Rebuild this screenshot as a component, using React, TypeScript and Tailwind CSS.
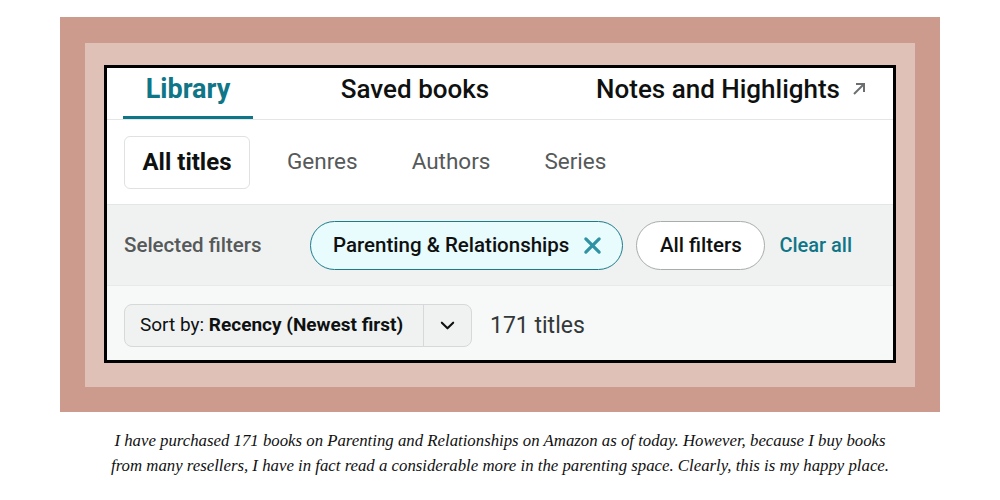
import React from 'react';

const ui = { fontFamily: 'Roboto, "Noto Sans", Arial, sans-serif' };

const ArrowUpRight = () => (
    <svg width="16" height="16" viewBox="0 0 16 16" fill="none" stroke="#6b6f70" strokeWidth="2">
        <path d="M3 13 L13 3" />
        <path d="M5 3 H13 V11" />
    </svg>
);

const CloseX = () => (
    <svg width="19" height="19" viewBox="0 0 20 20" fill="none" stroke="#2f93a3" strokeWidth="3.4" strokeLinecap="round">
        <path d="M3 3 L17 17" />
        <path d="M17 3 L3 17" />
    </svg>
);

const Chevron = () => (
    <svg width="17" height="17" viewBox="0 0 18 18" fill="none" stroke="#0f1111" strokeWidth="2.2" strokeLinecap="round" strokeLinejoin="round">
        <path d="M3 6 L9 12 L15 6" />
    </svg>
);

export default function App() {
    return (
        <div className="w-[1000px] h-[500px] bg-white overflow-hidden">
            {/* Frame */}
            <div className="mx-[60px] mt-[17px] h-[395px] bg-[#cd9b8d] pt-[26px] px-[25px]">
                <div className="h-[344px] bg-[#dfc1b8] pt-[22px] px-[19px]">
                    <div className="h-[298px] border-[3px] border-black bg-white flex flex-col" style={ui}>
                        {/* Top tabs */}
                        <div className="h-[52px] flex items-stretch border-b border-[#e3e6e6]">
                            <div className="ml-[16px] w-[130px] flex items-center justify-center border-b-[3px] border-[#0f7688] text-[27px] font-bold text-[#0f7688] pb-[6px]">
                                Library
                            </div>
                            <div className="w-[324px] flex items-center justify-center text-[26px] font-medium text-[#0f1111] pb-[9px]">
                                Saved books
                            </div>
                            <div className="flex-1 flex items-center justify-end pr-[26px] gap-[11px] text-[26px] font-medium text-[#0f1111] pb-[9px]">
                                Notes and Highlights
                                <ArrowUpRight />
                            </div>
                        </div>

                        {/* Category tabs */}
                        <div className="h-[84px] flex items-center pl-[17px]">
                            <div className="h-[53px] w-[126px] flex items-center justify-center border border-[#dfe2e2] rounded-md text-[24px] font-bold text-[#0f1111]">
                                All titles
                            </div>
                            <div className="ml-[37px] text-[22.5px] text-[#565959]">Genres</div>
                            <div className="ml-[54px] text-[22.5px] text-[#565959]">Authors</div>
                            <div className="ml-[54px] text-[22.5px] text-[#565959]">Series</div>
                        </div>

                        {/* Selected filters */}
                        <div className="h-[81px] flex items-center bg-[#f0f2f2] border-t border-[#e3e6e6] pl-[17px]">
                            <div className="w-[186px] text-[20.5px] font-medium text-[#565959]">Selected filters</div>
                            <div className="h-[49px] flex items-center gap-[14px] pl-[22px] pr-[20px] rounded-full border-[1.5px] border-[#1b7c8c] bg-[#e8fbfd] text-[20.5px] font-medium text-[#0f1111]">
                                Parenting &amp; Relationships
                                <CloseX />
                            </div>
                            <div className="ml-[13px] h-[49px] w-[129px] flex items-center justify-center rounded-full border-[1.5px] border-[#a9acac] bg-white text-[20.5px] font-medium text-[#0f1111]">
                                All filters
                            </div>
                            <div className="ml-[14px] text-[20px] font-medium text-[#0f7688]">Clear all</div>
                        </div>

                        {/* Sort row */}
                        <div className="flex-1 flex items-center bg-[#f7f8f8] border-t border-[#e8eaea] pl-[17px] pt-[4px]">
                            <div className="h-[43px] w-[348px] flex items-stretch rounded-lg border border-[#d5d9d9] bg-[#f0f2f2] text-[19px] text-[#0f1111]">
                                <div className="flex-1 flex items-center pl-[15px]">
                                    Sort by:&nbsp;<span className="font-bold">Recency (Newest first)</span>
                                </div>
                                <div className="w-[48px] flex items-center justify-center border-l border-[#d5d9d9]">
                                    <Chevron />
                                </div>
                            </div>
                            <div className="ml-[18px] text-[23px] text-[#333838] pt-[3px]">171 titles</div>
                        </div>
                    </div>
                </div>
            </div>

            {/* Caption */}
            <div
                className="mt-[16px] text-center italic text-[16.8px] leading-[25px] text-[#111]"
                style={{ fontFamily: '"Liberation Serif", "DejaVu Serif", serif' }}
            >
                <p>I have purchased 171 books on Parenting and Relationships on Amazon as of today. However, because I buy books</p>
                <p>from many resellers, I have in fact read a considerable more in the parenting space. Clearly, this is my happy place.</p>
            </div>
        </div>
    );
}
